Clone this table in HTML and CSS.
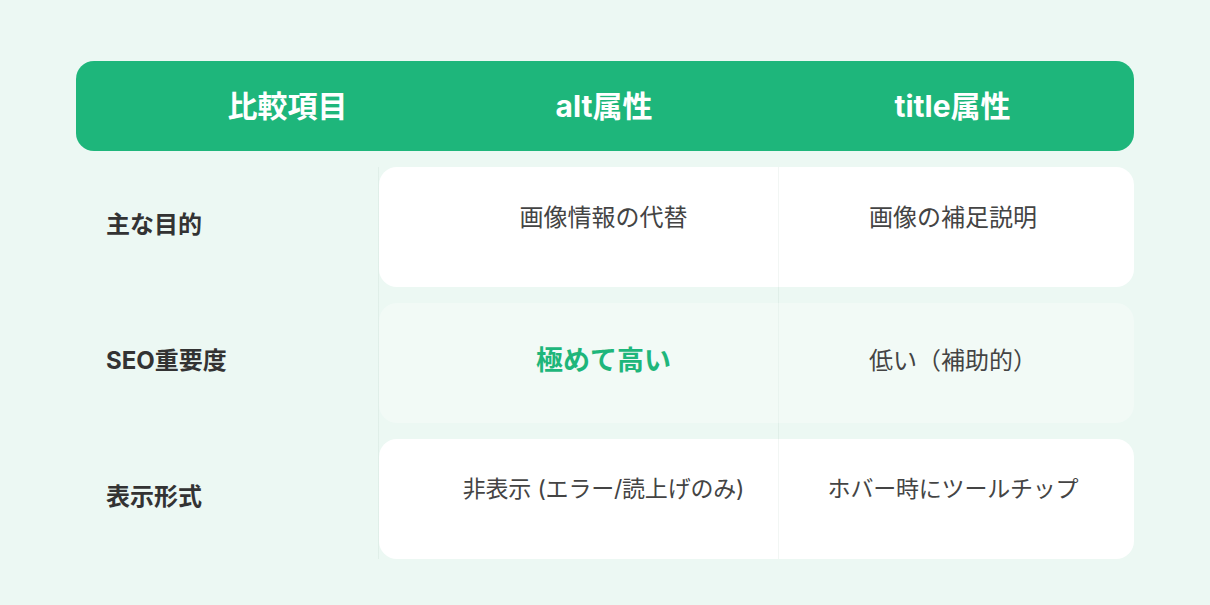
FILE: index.html
```html
<!DOCTYPE html>
<html lang="ja">
<head>
<meta charset="utf-8">
<link rel="stylesheet" href="styles.css">
</head>
<body>
<div class="page">
  <div class="table">
    <div class="head">
      <div class="h h1">比較項目</div>
      <div class="h h2">alt属性</div>
      <div class="h h3">title属性</div>
    </div>
    <div class="rows">
      <div class="row">
        <div class="label">主な目的</div>
        <div class="card white">
          <div class="cell c2">画像情報の代替</div>
          <div class="cell c3">画像の補足説明</div>
        </div>
      </div>
      <div class="row">
        <div class="label">SEO重要度</div>
        <div class="card tint">
          <div class="cell c2"><span class="strong">極めて高い</span></div>
          <div class="cell c3">低い（補助的）</div>
        </div>
      </div>
      <div class="row">
        <div class="label">表示形式</div>
        <div class="card white compact">
          <div class="cell c2">非表示 (エラー/読上げのみ)</div>
          <div class="cell c3">ホバー時にツールチップ</div>
        </div>
      </div>
    </div>
  </div>
</div>
</body>
</html>
```
FILE: styles.css
```css
* { box-sizing: border-box; }
html, body { margin: 0; padding: 0; }
body {
  background: #ecf8f3;
  font-family: Inter, "Noto Sans CJK JP", sans-serif;
  width: 1210px;
  height: 605px;
  overflow: hidden;
}
.page {
  padding: 61px 76px 0 76px;
}
.table {
  width: 1058px;
}
.head {
  display: grid;
  grid-template-columns: 303px 400px 355px;
  height: 90px;
  padding-bottom: 4px;
  background: #1eb67b;
  border-radius: 18px;
  align-items: center;
  color: #fff;
  font-weight: 700;
  font-size: 30px;
}
.h { text-align: center; }
.h1 { padding-left: 120px; }
.h2 { padding-left: 50px; }
.h3 { padding-right: 8px; }

.rows {
  margin-top: 16px;
  display: flex;
  flex-direction: column;
  gap: 16px;
  background-image:
    linear-gradient(rgba(0, 70, 40, 0.05), rgba(0, 70, 40, 0.05)),
    linear-gradient(rgba(0, 70, 40, 0.05), rgba(0, 70, 40, 0.05));
  background-size: 1px 100%, 1px 100%;
  background-position: 302px 0, 702px 0;
  background-repeat: no-repeat;
}
.row {
  display: grid;
  grid-template-columns: 303px 755px;
  height: 120px;
}
.label {
  display: flex;
  align-items: center;
  padding-left: 30px;
  padding-bottom: 10px;
  font-size: 24px;
  font-weight: 700;
  color: #333;
}
.card {
  display: grid;
  grid-template-columns: 400px 355px;
  border-radius: 18px;
  color: #444;
  font-size: 24px;
}
.white { background: #fff; }
.tint { background: rgba(255, 255, 255, 0.3); }
.compact {
  font-size: 23px;
  letter-spacing: -0.2px;
}
.cell {
  display: flex;
  align-items: center;
  justify-content: center;
  padding-bottom: 10px;
}
.white .cell { padding-bottom: 24px; }
.c2 {
  padding-left: 50px;
  border-right: 1px solid rgba(0, 70, 40, 0.05);
}
.tint .c2 { border-right-color: transparent; }
.c3 { padding-right: 7px; }
.strong {
  color: #1eb67b;
  font-weight: 700;
  font-size: 27px;
}
```
